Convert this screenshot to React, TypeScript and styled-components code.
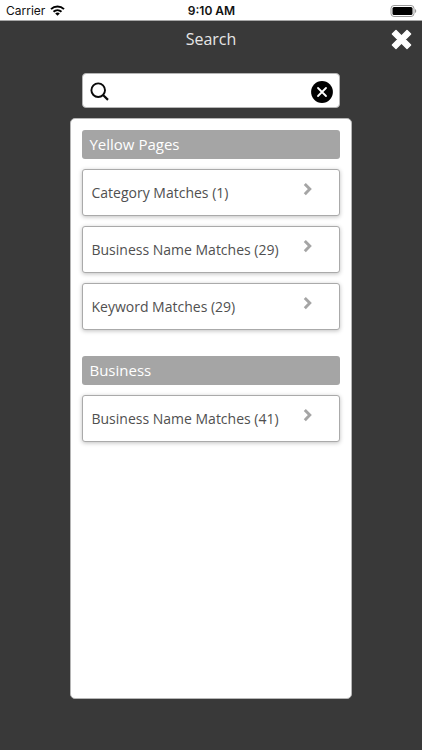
import React, { useState } from "react";
import styled, { createGlobalStyle } from "styled-components";

const GlobalStyle = createGlobalStyle`
  *, *::before, *::after { box-sizing: border-box; }
  body {
    margin: 0;
    background: #393939;
    font-family: "Open Sans", "Noto Sans", sans-serif;
  }
  button, input { font: inherit; }
`;

const Screen = styled.div`
  display: flex;
  flex-direction: column;
  min-height: 100vh;
  background: #393939;
`;

const StatusBar = styled.div`
  display: grid;
  grid-template-columns: 1fr auto 1fr;
  align-items: center;
  height: 21px;
  padding: 0 5px 0 6px;
  border-bottom: 1px solid #a8a8a8;
  background: #fff;
  color: #111;
  font-family: Inter, "Liberation Sans", sans-serif;
  font-size: 12px;
  line-height: 20px;
`;

const Carrier = styled.div`
  display: flex;
  align-items: center;
  gap: 5px;
`;

const Clock = styled.time`
  padding-top: 1px;
  font-weight: 600;
`;

const Battery = styled.svg`
  justify-self: end;
`;

const Header = styled.header`
  display: grid;
  grid-template-columns: 1fr auto 1fr;
  align-items: center;
  height: 36px;
  padding: 0 10px;
`;

const Title = styled.h1`
  grid-column: 2;
  margin: 0;
  color: #e6e6e6;
  font-size: 16px;
  font-weight: 400;
  line-height: 24px;
`;

const IconButton = styled.button`
  display: flex;
  justify-self: end;
  padding: 0;
  border: 0;
  background: none;
  cursor: pointer;
`;

const Content = styled.main`
  display: flex;
  flex: 1;
  flex-direction: column;
  gap: 10px;
  width: 66.6%;
  margin: 0 auto;
  padding: 16px 0 51px;
`;

const SearchBox = styled.form`
  display: flex;
  align-items: center;
  gap: 8px;
  height: 35px;
  margin: 0 12px;
  padding: 3px 6px 0 7px;
  border: 1px solid #b5b5b5;
  border-radius: 4px;
  background: #fff;
`;

const SearchInput = styled.input`
  flex: 1;
  min-width: 0;
  padding: 0;
  border: 0;
  outline: 0;
  background: transparent;
  color: #4a4a4a;
  font-size: 14px;
`;

const Panel = styled.div`
  display: flex;
  flex: 1;
  flex-direction: column;
  gap: 26px;
  padding: 11px;
  border: 1px solid #b5b5b5;
  border-radius: 5px;
  background: #fff;
`;

const Group = styled.section`
  display: flex;
  flex-direction: column;
  gap: 10px;
`;

const GroupTitle = styled.h2`
  margin: 0;
  padding: 0 7px;
  border-radius: 3px;
  background: #a5a5a5;
  color: #fff;
  font-size: 15px;
  font-weight: 400;
  line-height: 29px;
`;

const MatchRow = styled.button`
  display: flex;
  align-items: flex-start;
  justify-content: space-between;
  width: 100%;
  height: 47px;
  padding: 12px 26px 0 8px;
  border: 1px solid #aaa;
  border-radius: 3px;
  background: #fff;
  box-shadow: 0 1px 4px rgba(0, 0, 0, 0.25);
  color: #505050;
  font-size: 14px;
  line-height: 22px;
  text-align: left;
  white-space: nowrap;
  cursor: pointer;
`;

const groups = [
  {
    title: "Yellow Pages",
    rows: ["Category Matches (1)", "Business Name Matches (29)", "Keyword Matches (29)"],
  },
  { title: "Business", rows: ["Business Name Matches (41)"] },
];

const WifiIcon = () => (
  <svg width="15" height="11" viewBox="0 0 15 11" fill="none" stroke="#000" strokeWidth="2" aria-hidden="true">
    <path d="M1 4.1C4.6.6 10.4.6 14 4.1" />
    <path d="M3.5 6.7c2.3-2.1 5.7-2.1 8 0" />
    <path d="M7.5 10.8 5.2 8.5c1.3-1.2 3.3-1.2 4.6 0z" fill="#000" stroke="none" />
  </svg>
);

const CloseIcon = () => (
  <svg width="21" height="21" viewBox="0 0 21 21" aria-hidden="true">
    <path
      d="M5 1.4 10.5 6.9 16 1.4 19.6 5 14.1 10.5 19.6 16 16 19.6 10.5 14.1 5 19.6 1.4 16 6.9 10.5 1.4 5z"
      fill="#fff"
      stroke="#fff"
      strokeWidth="1.4"
      strokeLinejoin="round"
    />
  </svg>
);

const SearchIcon = () => (
  <svg width="20" height="20" viewBox="0 0 20 20" fill="none" stroke="#0a0a0a" strokeWidth="1.9" aria-hidden="true">
    <circle cx="8.2" cy="8.2" r="6.8" />
    <path d="m13 13 5 4.9" strokeWidth="2.2" />
  </svg>
);

const ClearIcon = () => (
  <svg width="22" height="22" viewBox="0 0 22 22" aria-hidden="true">
    <circle cx="11" cy="11" r="10.9" fill="#000" />
    <path d="m7 7 8 8m0-8-8 8" stroke="#fff" strokeWidth="1.8" strokeLinecap="round" />
  </svg>
);

const Chevron = () => (
  <svg width="10" height="14" viewBox="0 0 10 14" fill="none" stroke="#a5a5a5" strokeWidth="2.9" aria-hidden="true">
    <path d="m1.8 2 5 5.1-5 5.1" />
  </svg>
);

export default function App() {
  const [query, setQuery] = useState("");

  return (
    <>
      <GlobalStyle />
      <Screen>
        <StatusBar>
          <Carrier>
            Carrier
            <WifiIcon />
          </Carrier>
          <Clock>9:10 AM</Clock>
          <Battery width="27" height="12" viewBox="0 0 27 12" role="img" aria-label="Battery full">
            <rect x="1" y=".5" width="23" height="11" rx="3" fill="#fff" stroke="#999" />
            <rect x="2.5" y="2" width="20" height="8" rx="1.5" fill="#000" />
            <path d="M25 4c1.7.6 1.7 3.4 0 4z" fill="#999" />
          </Battery>
        </StatusBar>
        <Header>
          <Title>Search</Title>
          <IconButton type="button" aria-label="Close">
            <CloseIcon />
          </IconButton>
        </Header>
        <Content>
          <SearchBox role="search" onSubmit={(event) => event.preventDefault()}>
            <SearchIcon />
            <SearchInput
              type="text"
              aria-label="Search"
              value={query}
              onChange={(event) => setQuery(event.target.value)}
            />
            <IconButton type="button" aria-label="Clear search" onClick={() => setQuery("")}>
              <ClearIcon />
            </IconButton>
          </SearchBox>
          <Panel>
            {groups.map((group) => (
              <Group key={group.title}>
                <GroupTitle>{group.title}</GroupTitle>
                {group.rows.map((row) => (
                  <MatchRow key={row} type="button">
                    {row}
                    <Chevron />
                  </MatchRow>
                ))}
              </Group>
            ))}
          </Panel>
        </Content>
      </Screen>
    </>
  );
}
